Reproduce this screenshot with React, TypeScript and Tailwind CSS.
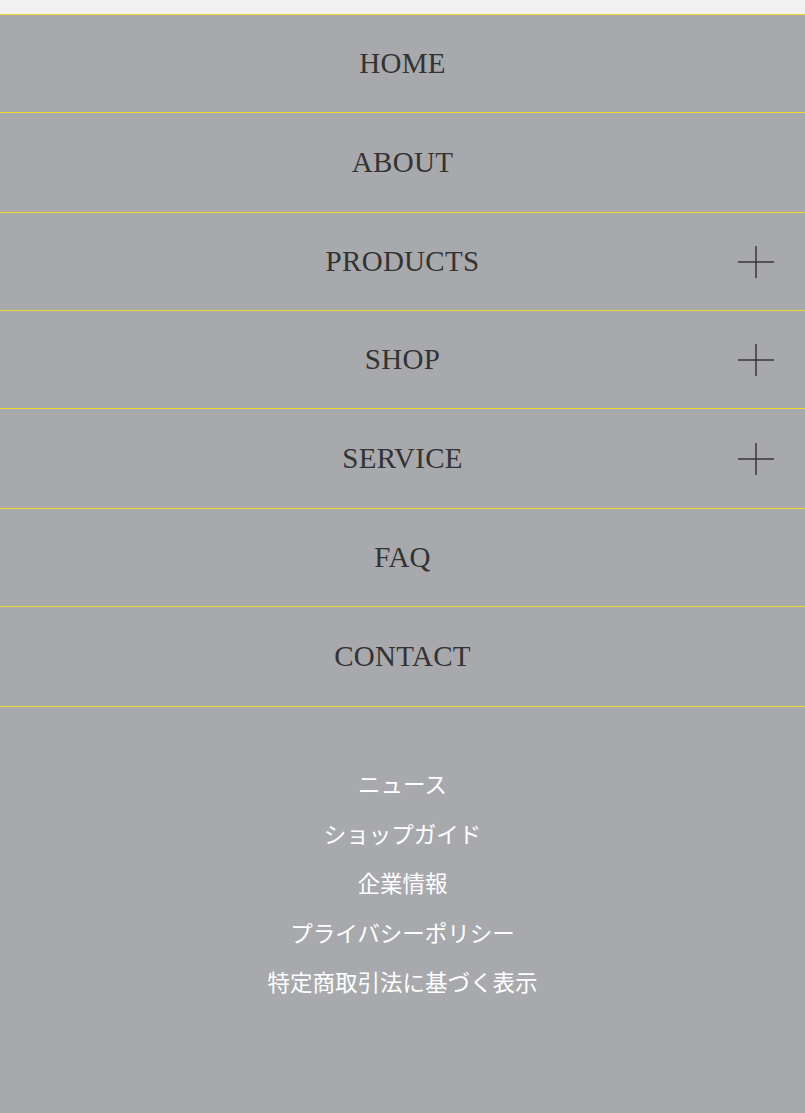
// Mobile drawer menu

const items = [
  { label: 'HOME', sub: false, h: 'h-[98px]' },
  { label: 'ABOUT', sub: false, h: 'h-[100px]' },
  { label: 'PRODUCTS', sub: true, h: 'h-[98px]' },
  { label: 'SHOP', sub: true, h: 'h-[98px]' },
  { label: 'SERVICE', sub: true, h: 'h-[100px]' },
  { label: 'FAQ', sub: false, h: 'h-[98px]' },
  { label: 'CONTACT', sub: false, h: 'h-[100px]' },
]

const links = ['ニュース', 'ショップガイド', '企業情報', 'プライバシーポリシー', '特定商取引法に基づく表示']

function PlusIcon() {
  return (
    <svg width="36" height="32" viewBox="0 0 36 32" fill="none">
      <path d="M0 16H36M18 0V32" stroke="#38383a" strokeWidth="1.5" />
    </svg>
  )
}

export default function App() {
  return (
    <div className="min-h-[1113px] w-full bg-[#a8a9ac] flex flex-col">
      <div className="h-[14px] bg-[#f2f2f2]" />
      <nav className="flex flex-col border-t border-[#f0dc30]">
        {items.map((item) => (
          <a
            key={item.label}
            href="#"
            className={`relative flex ${item.h} items-center justify-center border-b border-[#f0dc30] text-[29px] text-[#333] tracking-[0.01em]`}
            style={{ fontFamily: '"Liberation Serif", "DejaVu Serif", serif' }}
          >
            {item.label}
            {item.sub && (
              <span className="absolute right-[31px] top-1/2 -translate-y-1/2 flex">
                <PlusIcon />
              </span>
            )}
          </a>
        ))}
      </nav>
      <div
        className="flex flex-col items-center pt-[52px] text-[22.5px] text-white"
        style={{ fontFamily: '"Noto Sans CJK JP", "Noto Sans", sans-serif' }}
      >
        {links.map((l) => (
          <a key={l} href="#" className="h-[49.5px] leading-[49.5px]">
            {l}
          </a>
        ))}
      </div>
    </div>
  )
}
